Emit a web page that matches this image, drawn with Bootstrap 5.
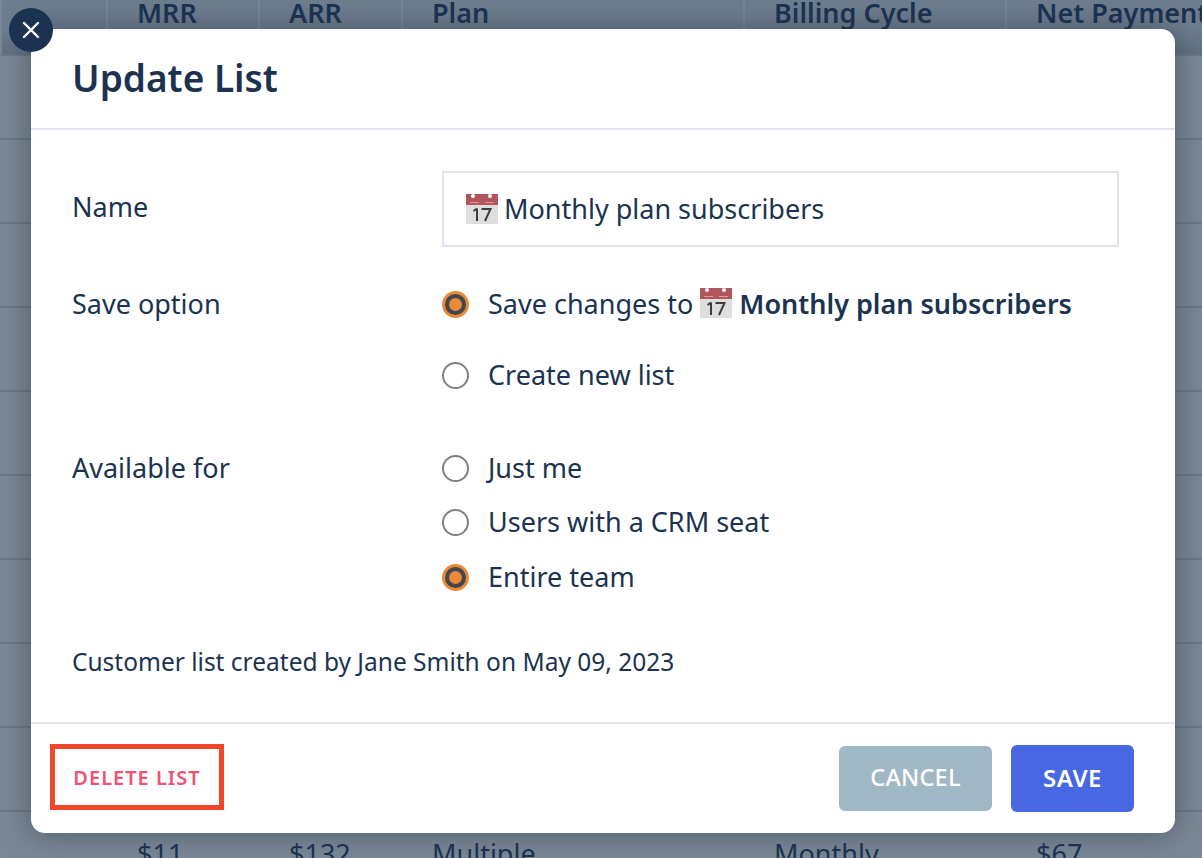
<!doctype html>
<html lang="en">
<head>
<meta charset="utf-8">
<title>Update List</title>
<link href="https://cdn.jsdelivr.net/npm/bootstrap@5.3.0/dist/css/bootstrap.min.css" rel="stylesheet">
<style>
html,body{height:100%}
body{background:#7a8896;font-family:"Noto Sans",sans-serif;color:#1b3350;overflow:hidden;position:relative;font-size:27px}
.bg-wrap{height:858px;overflow:hidden}
.bg-table{display:grid;grid-template-columns:106px 152px 143px 342px 262px 197px;margin-top:-31px;color:#1b3350;white-space:nowrap}
.bg-head{height:87px;background:linear-gradient(#6e7e8f 70%,#607082);border-bottom:2px solid #6a7886;font-weight:600;padding:27px 0 0 29px;border-left:2px solid #7a8897;line-height:34px}
.bg-cell{height:84px;border-bottom:2px solid #6a7886;padding:25px 0 0 31px;line-height:34px}
.dlg{position:absolute;left:31px;top:29px;width:1144px;height:804px;background:#fff;border-radius:14px;box-shadow:0 0 30px rgba(40,50,65,.55);display:flex;flex-direction:column}
.dlg-close{position:absolute;left:-22px;top:-21px;width:44px;height:44px;border-radius:50%;background:#1b3350;border:0;padding:0;display:flex;align-items:center;justify-content:center}
.dlg-head{height:101px;border-bottom:2px solid #dfe4ee;padding:24px 41px 0}
.dlg-title{font-size:37px;line-height:50px;font-weight:600;margin:0;color:#1b3350}
.dlg-body{flex:1;padding:41px 56px 0 41px}
.lab{width:370px;flex:none;line-height:36px}
.name-box{width:677px;height:76px;border:2px solid #dfe4ee;display:flex;align-items:center;padding:0 22px;gap:6px;margin-bottom:39px}
.cal{width:32px;height:32px;flex:none;vertical-align:-5px}
.opt{display:flex;align-items:center;gap:19px;height:36px}
.rd{width:27px;height:27px;border-radius:50%;border:2.750px solid #808080;flex:none;background:#fff}
.rd.on{background:#ea8a38;border:0;display:flex;align-items:center;justify-content:center}
.rd.on::after{content:"";width:21px;height:21px;border-radius:50%;border:4px solid #414650}
.gap-a{margin-bottom:35px}
.gap-b{margin-bottom:18.500px}
.g-save{margin-bottom:57px}
.g-avail{margin-bottom:50px}
.name-lab{margin-top:18px}
.semi{font-weight:600}
.meta{font-size:24.500px;line-height:34px}
.dlg-foot{height:111px;border-top:2px solid #dfe4ee;display:flex;align-items:center;justify-content:space-between;padding:0 41px 0 19px}
.del-box{width:174px;height:66px;border:5px solid #f0462a;display:flex;align-items:center;justify-content:center;color:#ef5474;font-size:20px;font-weight:600;letter-spacing:1px;background:#fff;padding:1px 0 0;margin-bottom:3px}
.b-cancel,.b-save{border:0;border-radius:6px;color:#fff;font-size:24px;font-weight:600;letter-spacing:.5px;display:flex;align-items:center;justify-content:center;padding:0 0 2px}
.b-cancel{width:153px;height:65px;background:#9fb8c6;font-weight:500;font-size:23.500px;letter-spacing:.2px}
.b-save{width:123px;height:67px;background:#4767e3}
.btn-gap{gap:19px}
</style>
</head>
<body>
<div class="bg-wrap" aria-hidden="true">
  <div class="bg-table">
    <div class="bg-head"></div><div class="bg-head">MRR</div><div class="bg-head">ARR</div><div class="bg-head">Plan</div><div class="bg-head">Billing Cycle</div><div class="bg-head">Net Payment</div>
    <div class="bg-cell"></div><div class="bg-cell"></div><div class="bg-cell"></div><div class="bg-cell"></div><div class="bg-cell"></div><div class="bg-cell"></div>
    <div class="bg-cell"></div><div class="bg-cell"></div><div class="bg-cell"></div><div class="bg-cell"></div><div class="bg-cell"></div><div class="bg-cell"></div>
    <div class="bg-cell"></div><div class="bg-cell"></div><div class="bg-cell"></div><div class="bg-cell"></div><div class="bg-cell"></div><div class="bg-cell"></div>
    <div class="bg-cell"></div><div class="bg-cell"></div><div class="bg-cell"></div><div class="bg-cell"></div><div class="bg-cell"></div><div class="bg-cell"></div>
    <div class="bg-cell"></div><div class="bg-cell"></div><div class="bg-cell"></div><div class="bg-cell"></div><div class="bg-cell"></div><div class="bg-cell"></div>
    <div class="bg-cell"></div><div class="bg-cell"></div><div class="bg-cell"></div><div class="bg-cell"></div><div class="bg-cell"></div><div class="bg-cell"></div>
    <div class="bg-cell"></div><div class="bg-cell"></div><div class="bg-cell"></div><div class="bg-cell"></div><div class="bg-cell"></div><div class="bg-cell"></div>
    <div class="bg-cell"></div><div class="bg-cell"></div><div class="bg-cell"></div><div class="bg-cell"></div><div class="bg-cell"></div><div class="bg-cell"></div>
    <div class="bg-cell"></div><div class="bg-cell"></div><div class="bg-cell"></div><div class="bg-cell"></div><div class="bg-cell"></div><div class="bg-cell"></div>
    <div class="bg-cell"></div><div class="bg-cell">$11</div><div class="bg-cell">$132</div><div class="bg-cell">Multiple</div><div class="bg-cell">Monthly</div><div class="bg-cell">$67</div>
  </div>
</div>
<svg width="0" height="0" class="position-absolute">
  <symbol id="cal" viewBox="0 0 32 32">
    <rect x="0" y="1" width="32" height="30" fill="#dedede"/>
    <rect x="0" y="1" width="32" height="11" fill="#b0565c"/>
    <circle cx="7" cy="3" r="2" fill="#fff"/><circle cx="24" cy="3" r="2" fill="#fff"/>
    <path d="M4 9.500h9M19 9.500h9" stroke="#d49a9e" stroke-width="1"/>
    <path d="M11 15.500v12.500M7.500 18l3.500-2.500M15.500 16h9l-5.500 12" fill="none" stroke="#3d3d3d" stroke-width="2"/>
  </symbol>
</svg>
<div class="dlg" role="dialog" aria-label="Update List">
  <button class="dlg-close" aria-label="Close"><svg width="18" height="18" viewBox="0 0 18 18"><path d="M2 2l14 14M16 2L2 16" stroke="#fff" stroke-width="2.400" stroke-linecap="round"/></svg></button>
  <div class="dlg-head"><h1 class="dlg-title">Update List</h1></div>
  <div class="dlg-body">
    <div class="d-flex align-items-start">
      <div class="lab name-lab">Name</div>
      <div class="name-box"><svg class="cal"><use href="#cal"/></svg><span>Monthly plan subscribers</span></div>
    </div>
    <div class="d-flex g-save">
      <div class="lab">Save option</div>
      <div>
        <div class="opt gap-a"><span class="rd on"></span><span>Save changes to <svg class="cal"><use href="#cal"/></svg> <span class="semi">Monthly plan subscribers</span></span></div>
        <div class="opt"><span class="rd"></span><span>Create new list</span></div>
      </div>
    </div>
    <div class="d-flex g-avail">
      <div class="lab">Available for</div>
      <div>
        <div class="opt gap-b"><span class="rd"></span><span>Just me</span></div>
        <div class="opt gap-b"><span class="rd"></span><span>Users with a CRM seat</span></div>
        <div class="opt"><span class="rd on"></span><span>Entire team</span></div>
      </div>
    </div>
    <div class="meta">Customer list created by Jane Smith on May 09, 2023</div>
  </div>
  <div class="dlg-foot">
    <button class="del-box">DELETE LIST</button>
    <div class="d-flex align-items-center btn-gap">
      <button class="b-cancel">CANCEL</button>
      <button class="b-save">SAVE</button>
    </div>
  </div>
</div>
<script src="https://cdn.jsdelivr.net/npm/bootstrap@5.3.0/dist/js/bootstrap.bundle.min.js"></script>
</body>
</html>
